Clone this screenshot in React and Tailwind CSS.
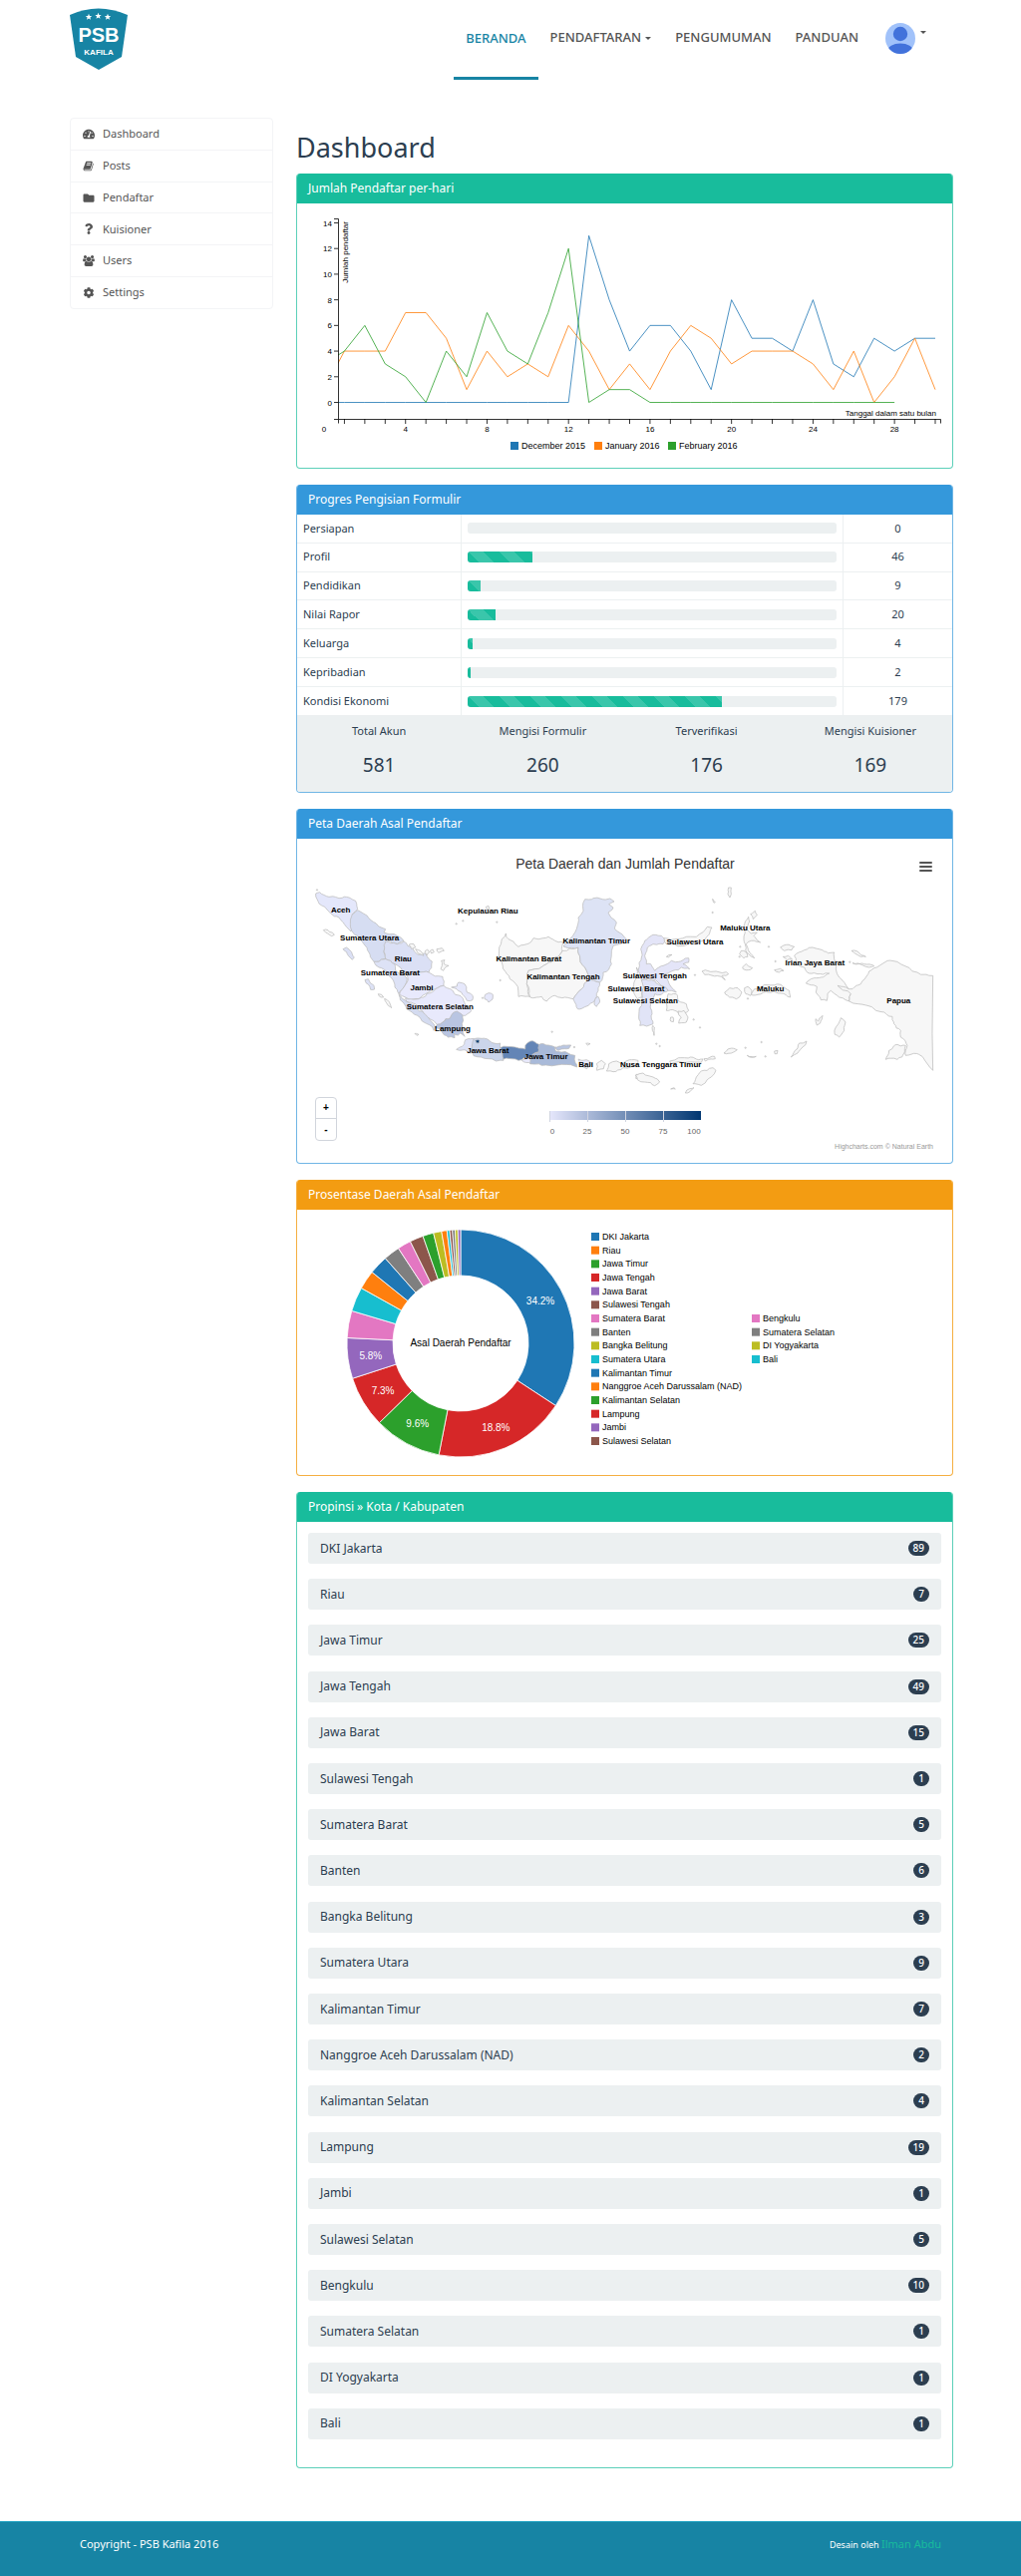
import React from "react";
import { FaTachometerAlt, FaFolder, FaQuestion, FaCog } from "react-icons/fa";

const SANS = "font-['Liberation_Sans',Arial,sans-serif]";

function BookIcon({ className }) {
  return (
    <svg viewBox="0 0 1792 1792" className={className} fill="currentColor" aria-hidden="true">
      <path d="M1639 478q40 57 18 129l-275 906q-19 64-76.5 107.5t-122.5 43.5h-923q-77 0-148.5-53.5t-99.5-131.5q-24-67-2-127 0-4 3-27t4-37q1-8-3-21.5t-3-19.5q2-11 8-21t16.5-23.5 16.5-23.5q23-38 45-91.5t30-91.5q3-10 .5-30t-.5-28q3-11 17-28t17-23q21-36 42-92t25-90q1-9-2.5-32t.5-28q4-13 22-30.5t22-22.5q19-26 42.5-84.5t27.5-96.5q1-8-3-25.5t-2-26.5q2-8 9-18t18-23 17-21q8-12 16.5-30.5t15-35 16-36 19.5-32 26.5-23.5 36-11.5 47.5 5.5l-1 3q38-9 51-9h761q74 0 114 56t18 130l-274 906q-36 119-71.5 153.5t-128.5 34.5h-869q-27 0-38 15-11 16-1 43 24 70 144 70h923q29 0 56-15.5t35-41.5l300-987q7-22 5-57 38 15 59 43zm-1064 2q-4 13 2 22.5t20 9.5h608q13 0 25.5-9.5t16.5-22.5l21-64q4-13-2-22.5t-20-9.5h-608q-13 0-25.5 9.5t-16.5 22.5zm-83 256q-4 13 2 22.5t20 9.5h608q13 0 25.5-9.5t16.5-22.5l21-64q4-13-2-22.5t-20-9.5h-608q-13 0-25.5 9.5t-16.5 22.5z" />
    </svg>
  );
}

function UsersIcon({ className }) {
  return (
    <svg viewBox="0 0 1920 1792" className={className} fill="currentColor" aria-hidden="true">
      <path d="M593 896q-162 5-265 128h-134q-82 0-138-40.5t-56-118.5q0-353 124-353 6 0 43.5 21t97.5 42.5 119 21.5q67 0 133-23-5 37-5 66 0 139 81 256zm1071 637q0 120-73 189.5t-194 69.5h-874q-121 0-194-69.5t-73-189.5q0-53 3.5-103.5t14-109 26.5-108.5 43-97.5 62-81 85.5-53.5 111.5-20q10 0 43 21.500t73 48 107 48 135 21.5 135-21.5 107-48 73-48 43-21.5q61 0 111.5 20t85.5 53.5 62 81 43 97.5 26.5 108.5 14 109 3.5 103.5zm-1024-1277q0 106-75 181t-181 75-181-75-75-181 75-181 181-75 181 75 75 181zm704 384q0 159-112.5 271.500t-271.500 112.500-271.500-112.500-112.500-271.500 112.500-271.500 271.500-112.500 271.500 112.500 112.500 271.500zm576 225q0 78-56 118.500t-138 40.500h-134q-103-123-265-128 81-117 81-256 0-29-5-66 66 23 133 23 59 0 119-21.500t97.500-42.500 43.500-21q124 0 124 353zm-128-609q0 106-75 181t-181 75-181-75-75-181 75-181 181-75 181 75 75 181z" />
    </svg>
  );
}

function Logo() {
  return (
    <svg viewBox="0 0 58 62" className="h-[62px] w-[58px]" role="img" aria-label="PSB Kafila">
      <path d="M0 7Q28.500 -6 58 7L52 49L29 62L6 49Z" fill="#1784a4" />
      <g fill="#fff">
        {[[19, 9], [28.5, 8], [38, 9]].map(([x, y]) => (
          <path
            key={x}
            transform={`translate(${x} ${y})`}
            d="M0 -3.300L.9 -1.100L3.200 -1L1.400 .5L2 2.800L0 1.500L-2 2.800L-1.400 .5L-3.200 -1L-.9 -1.100Z"
          />
        ))}
        <text x="29" y="34" textAnchor="middle" className="font-['Liberation_Sans'] text-[20px] font-bold">PSB</text>
        <text x="29" y="47" textAnchor="middle" className="font-['Liberation_Sans'] text-[8px] font-bold">KAFILA</text>
      </g>
    </svg>
  );
}

function Caret() {
  return (
    <svg viewBox="0 0 6 3" className="h-[3px] w-[6px]" fill="currentColor" aria-hidden="true">
      <path d="M0 0H6L3 3Z" />
    </svg>
  );
}

function Header() {
  const link = "flex h-20 items-center px-3 pb-1";
  return (
    <header className="flex h-20 items-start justify-between">
      <a href="#" className="mt-2"><Logo /></a>
      <nav className="flex pr-[27px] text-[13px] font-medium text-[#555]">
        <a href="#" className={`${link} border-b-[3px] border-[#1784a4] pt-1 text-[#1784a4]`}>BERANDA</a>
        <button className={`${link} gap-1`}>PENDAFTARAN <Caret /></button>
        <a href="#" className={link}>PENGUMUMAN</a>
        <a href="#" className={link}>PANDUAN</a>
        <button className="ml-[15px] mt-[23px] flex h-[31px] items-start gap-[5px]" aria-label="Akun">
          <svg viewBox="0 0 30 31" className="h-[31px] w-[30px]" aria-hidden="true">
            <clipPath id="avatar"><ellipse cx="15" cy="15.500" rx="15" ry="15.500" /></clipPath>
            <g clipPath="url(#avatar)">
              <rect width="30" height="31" fill="#a1c2fa" />
              <ellipse cx="15" cy="11" rx="7.200" ry="7.200" fill="#4272db" />
              <ellipse cx="15" cy="28.500" rx="13" ry="8" fill="#4272db" />
            </g>
          </svg>
          <span className="mt-2"><Caret /></span>
        </button>
      </nav>
    </header>
  );
}

const MENU = [
  ["Dashboard", FaTachometerAlt],
  ["Posts", BookIcon],
  ["Pendaftar", FaFolder],
  ["Kuisioner", FaQuestion],
  ["Users", UsersIcon],
  ["Settings", FaCog],
];

function Sidebar() {
  return (
    <nav className="mt-[38px] flex min-h-[192px] w-[204px] shrink-0 flex-col self-start rounded border border-gray-100 text-[11px] text-[#555]">
      {MENU.map(([label, Icon], i) => (
        <a
          key={label}
          href="#"
          className={`flex flex-1 items-center gap-2 px-3 ${i ? "border-t border-gray-100" : ""}`}
        >
          <span className="flex w-3 justify-center"><Icon className="h-[11px] w-3" /></span>
          {label}
        </a>
      ))}
    </nav>
  );
}

const TONES = {
  teal: ["border-[#18bc9c]/70", "bg-[#18bc9c]"],
  blue: ["border-[#3498db]/70", "bg-[#3498db]"],
  orange: ["border-[#f39c12]/80", "bg-[#f39c12]"],
};

function Panel({ title, tone, children }) {
  const [border, bg] = TONES[tone];
  return (
    <section className={`mb-4 overflow-hidden rounded border border-t-0 ${border}`}>
      <h2 className={`flex h-[30px] items-center px-[11px] text-[12px] text-white ${bg}`}>{title}</h2>
      {children}
    </section>
  );
}

const SERIES = [
  ["December 2015", "#1f77b4", [0, 0, 0, 0, 0, 0, 0, 0, 0, 0, 0, 0, 0, 13, 8, 4, 6, 6, 4, 1, 8, 5, 5, 4, 8, 3, 2, 5, 4, 5, 5], 214],
  ["January 2016", "#ff7f0e", [1, 4, 4, 4, 7, 7, 5, 1, 4, 2, 3, 2, 6, 4, 1, 3, 1, 4, 6, 5, 3, 4, 4, 4, 3, 1, 4, 0, 2, 5, 1], 298],
  ["February 2016", "#2ca02c", [3, 4, 6, 3, 2, 0, 4, 2, 7, 4, 3, 7, 12, 0, 1, 1, 0, 0, 0, 0, 0, 0, 0, 0, 0, 0, 0, 0, 0], 372],
];

function LineChart() {
  const x = (d) => 27 + (d * 613) / 30;
  const y = (v) => 199.5 - (v * 180) / 14;
  const days = Array.from({ length: 30 }, (_, i) => i + 1);
  return (
    <svg viewBox="0 0 657 265" className={`block w-full ${SANS} text-[8px]`} role="img" aria-label="Jumlah pendaftar per hari">
      <clipPath id="plot"><rect x="41" y="10" width="604" height="206" /></clipPath>
      <g clipPath="url(#plot)" fill="none">
        {SERIES.map(([name, color, data]) => (
          <polyline key={name} stroke={color} strokeOpacity=".8" points={data.map((v, i) => `${x(i)},${y(v)}`).join(" ")} />
        ))}
      </g>
      <g stroke="#000" strokeOpacity=".8" fill="none">
        <path d="M37 15.500H41.500V216.500H37M41.500 220.500V216.500H645.500V220.500" />
        {[0, 2, 4, 6, 8, 10, 12, 14].map((v) => <path key={v} d={`M37 ${y(v)}H41`} />)}
        {days.map((d) => <path key={d} d={`M${x(d)} 216V221`} />)}
      </g>
      {[0, 2, 4, 6, 8, 10, 12, 14].map((v) => <text key={v} x="35" y={y(v) + 3} textAnchor="end">{v}</text>)}
      {[4, 8, 12, 16, 20, 24, 28].map((d) => <text key={d} x={x(d)} y="229" textAnchor="middle">{d}</text>)}
      <text x="27" y="229" textAnchor="middle">0</text>
      <text x="641" y="213" textAnchor="end">Tanggal dalam satu bulan</text>
      <text transform="translate(51 18) rotate(-90)" textAnchor="end">Jumlah pendaftar</text>
      {SERIES.map(([name, color, , left]) => (
        <g key={name}>
          <rect x={left} y="239" width="8" height="8" fill={color} />
          <text x={left + 11} y="246" className="text-[9px]">{name}</text>
        </g>
      ))}
    </svg>
  );
}

const STEPS = [["Persiapan", 0], ["Profil", 46], ["Pendidikan", 9], ["Nilai Rapor", 20], ["Keluarga", 4], ["Kepribadian", 2], ["Kondisi Ekonomi", 179]];
const TOTALS = [["Total Akun", 581], ["Mengisi Formulir", 260], ["Terverifikasi", 176], ["Mengisi Kuisioner", 169]];

function Progress() {
  return (
    <>
      <table className="h-[201px] w-full border-collapse text-[11px]">
        <tbody>
          {STEPS.map(([name, n], i) => (
            <tr key={name} className={i ? "border-t border-[#ecf0f1]" : ""}>
              <th scope="row" className="w-1/4 px-[6px] text-left font-normal">{name}</th>
              <td className="border-x border-[#ecf0f1] px-[6px]">
                <div className="h-[11px] overflow-hidden rounded-[3px] bg-[#ecf0f1]">
                  <div
                    className="h-full bg-[#18bc9c] bg-[linear-gradient(45deg,rgba(255,255,255,.15)_25%,transparent_25%,transparent_50%,rgba(255,255,255,.15)_50%,rgba(255,255,255,.15)_75%,transparent_75%,transparent)] bg-[length:31px_31px]"
                    style={{ width: `${(n / 260) * 100}%` }}
                  />
                </div>
              </td>
              <td className="w-1/6 text-center">{n}</td>
            </tr>
          ))}
        </tbody>
      </table>
      <dl className="grid h-[77px] grid-cols-4 bg-[#ecf0f1] text-center">
        {TOTALS.map(([name, n]) => (
          <div key={name} className="pt-2">
            <dt className="text-[11px] leading-4">{name}</dt>
            <dd className="mt-3 text-[19px] leading-7">{n}</dd>
          </div>
        ))}
      </dl>
    </>
  );
}

const NONE = "#f7f7f7";
/* Land polygons: [fill, x-origin, points] on a grid of a third of a pixel. */
const LAND = [
  ["#e4e7fb", 0, "80 288 92 284 120 298 150 302 180 300 200 310 206 335 190 350 188 375 186 402 172 388 150 360 125 348 100 325 84 305"],
  ["#d6ddf2", 0, "206 338 235 355 262 378 290 395 285 405 300 410 345 430 325 440 300 430 290 450 285 465 290 485 255 493 240 465 225 440 210 420 188 400 190 350"],
  ["#dbe0f5", 0, "290 432 325 440 345 432 372 452 385 470 410 468 430 492 420 525 380 532 355 528 340 520 318 500 305 490 290 485 285 462"],
  ["#dde2f6", 0, "255 493 290 485 305 490 318 500 320 520 345 530 355 545 345 570 330 590 318 570 300 535 270 510"],
  ["#e8e9fc", 0, "355 528 380 532 420 525 462 538 465 565 440 575 410 590 390 605 350 600 332 592 345 570 358 548"],
  ["#e8e9fc", 0, "465 565 485 575 500 592 520 600 530 625 548 640 530 655 505 645 485 662 462 675 445 682 400 640 380 620 352 612 350 602 390 605 415 588 440 575"],
  ["#d4dbf0", 0, "330 592 352 612 378 625 400 642 430 675 440 690 435 700 400 672 370 645 345 618"],
  ["#b9c5e2", 0, "462 675 485 662 492 648 505 642 522 655 520 680 528 718 515 708 508 714 495 708 498 722 478 720 460 705 440 690 445 682"],
  ["#e6e8fb", 0, "488 570 505 567 510 555 528 560 535 585 552 595 552 608 535 610 522 592 508 580"],
  ["#e6e8fb", 0, "590 592 600 587 613 592 612 606 600 615 588 605"],
  [NONE, 0, "103 398 110 396 136 412 128 416"],
  ["#dbe0f5", 0, "162 455 172 450 188 464 196 480 190 487 178 475"],
  ["#dde2f6", 0, "228 548 238 545 255 565 257 576 245 577"],
  [NONE, 0, "268 590 278 592 284 600 276 600"],
  [NONE, 0, "287 604 295 608 308 632 298 625"],
  [NONE, 0, "378 709 390 712 384 715"],
  [NONE, 0, "360 442 375 440 380 450 368 455"],
  [NONE, 0, "380 455 395 460 405 475 388 468"],
  [NONE, 0, "408 462 416 456 422 465 414 474"],
  [NONE, 0, "424 460 432 456 436 464 428 468"],
  [NONE, 0, "444 455 460 452 466 460 450 466"],
  [NONE, 0, "458 490 468 488 466 500 480 505 468 512 464 520 456 515 460 505"],
  [NONE, 0, "592 328 600 325 602 334 596 337"],
  ["#dde2f6", 0, "530 728 555 724 560 735 550 752 548 768 528 758 503 757 520 748"],
  ["#cbd5eb", 0, "555 726 580 724 605 732 635 738 640 765 645 790 600 785 555 776 550 752"],
  ["#003a75", 0, "560 730 573 730 570 738 564 737"],
  ["#6385b6", 0, "636 752 680 750 710 756 716 738 726 732 752 742 750 765 735 770 720 780 690 790 645 786"],
  ["#e8e9fc", 0, "700 790 722 780 728 800"],
  ["#a9bad9", 0, "752 742 780 744 800 750 802 762 860 775 866 810 820 802 760 805 725 800 730 775 750 766"],
  ["#b9c6e2", 0, "800 750 825 744 848 744 842 754 810 760"],
  ["#e8e9fc", 0, "870 786 895 788 912 800 896 815 878 802"],
  [NONE, 0, "925 800 940 790 952 800 946 815 926 820"],
  [NONE, 0, "955 822 962 800 985 792 1005 802 1030 788 1050 790 1050 802 1005 812 975 824"],
  [NONE, 0, "893 739 906 740 898 744"],
  [NONE, 0, "1044 832 1055 832 1052 845 1043 844"],
  [NONE, 0, "652 408 660 425 690 448 715 440 735 422 780 418 800 430 825 435 822 460 800 480 775 500 720 520 715 560 725 598 690 598 682 560 655 530 640 495 632 450 640 425"],
  [NONE, 0, "822 460 870 450 875 480 895 520 905 545 880 575 855 605 830 600 800 595 775 612 760 598 725 600 715 560 720 520 775 500 800 480"],
  ["#dde3f5", 0, "890 305 915 302 965 303 978 312 962 320 975 330 960 345 985 375 980 395 1015 425 975 445 970 500 945 525 935 555 905 545 895 520 875 480 870 450 825 447 840 430 860 405 870 360 885 340"],
  ["#e2e6f8", 0, "905 548 935 556 930 580 925 600 900 625 868 635 855 605 880 575"],
  ["#e2e6f8", 0, "922 602 930 598 935 612 925 628 918 622"],
  ["#e4e5f8", 990, "70 480 68 455 80 430 92 420 105 412 130 415 140 425 135 440 105 440 88 450 80 475 85 500 98 500 110 520 135 505 160 490 195 488 212 482 212 495 195 500 215 515 190 510 165 520 140 530 150 550 175 585 150 580 120 555 100 545 70 550 60 520"],
  ["#e1e4f7", 990, "70 548 100 548 120 560 150 580 130 592 110 590 98 620 102 650 105 680 65 685 62 660 72 610"],
  [NONE, 990, "60 520 70 548 72 600 58 605 45 580 50 550 55 510"],
  [NONE, 990, "138 422 185 424 235 418 268 388 282 390 275 408 255 430 200 445 145 440"],
  [NONE, 990, "150 590 175 590 180 610 205 620 212 640 190 650 170 640 145 640 148 610"],
  [NONE, 990, "180 642 198 640 210 660 205 675 182 678 190 660"],
  [NONE, 990, "158 660 165 660 166 674 158 672"],
  [NONE, 990, "104 685 109 690 108 715 103 700"],
  [NONE, 990, "145 478 162 472 152 480"],
  [NONE, 990, "332 270 340 270 340 290 336 300 330 290"],
  [NONE, 990, "284 304 292 314 288 316"],
  [NONE, 990, "382 405 380 380 392 358 395 372 388 395 400 408 418 405 408 415 428 435 400 430 385 440 395 465 410 482 392 470 382 440"],
  [NONE, 990, "398 350 412 340 418 352 406 365"],
  [NONE, 990, "370 460 382 462 390 478 378 482 365 470"],
  [NONE, 990, "374 510 385 500 404 512 392 518 376 515"],
  [NONE, 990, "470 518 488 514 498 520 484 525"],
  [NONE, 990, "252 522 262 518 325 524 332 530 312 535 322 548 310 538 260 532"],
  [NONE, 990, "320 585 335 572 360 572 372 585 355 605 335 600"],
  [NONE, 990, "380 572 390 568 402 580 398 595 384 590"],
  [NONE, 990, "400 592 410 575 440 562 490 562 515 580 518 600 490 588 450 585 420 592"],
  [NONE, 990, "488 450 505 442 530 448 522 458 500 460"],
  [NONE, 990, "496 478 512 475 524 486 508 488"],
  [NONE, 990, "530 475 560 458 585 450 620 462 650 465 650 485 655 500 665 540 690 570 700 590 695 612 665 600 640 580 630 590 628 610 610 608 595 585 598 568 565 558 580 545 610 540 635 528 600 530 575 528 560 510 535 500"],
  [NONE, 990, "702 460 720 462 745 478 730 478 712 468"],
  [NONE, 990, "705 497 740 500 770 506 745 508"],
  [NONE, 990, "700 590 695 612 750 625 800 645 825 658 830 680 850 700 850 720 870 745 865 775 905 772 947 820 945 710 947 535 900 525 850 500 810 490 770 512 745 540 730 560 705 575 685 570 660 565"],
  [NONE, 990, "805 787 815 760 840 742 865 745 862 765 840 787"],
  [NONE, 990, "594 665 602 672 615 655 608 678 598 684"],
  [NONE, 990, "655 690 670 662 684 675 680 700 665 720 652 712"],
  [NONE, 990, "520 780 532 760 545 738 567 732 555 750 540 768"],
  [NONE, 990, "470 762 480 760 478 770 471 770"],
  [NONE, 990, "318 768 330 756 358 758 345 766 325 770"],
  [NONE, 990, "388 775 415 778 400 781"],
  [NONE, 990, "200 782 235 786 255 786 250 796 205 796 160 800 155 792"],
  [NONE, 990, "258 785 290 778 292 785 262 792"],
  [NONE, 990, "225 860 235 840 250 822 285 812 294 820 280 840 250 865"],
  [NONE, 990, "202 888 215 875 228 872 216 884"],
  [NONE, 990, "52 835 75 828 105 840 125 855 110 866 80 855 58 848"],
  [NONE, 990, "158 876 168 872 172 876"],
];
const ISLETS = [[84, 277], [503, 379], [523, 370], [625, 374], [635, 549], [582, 602], [791, 704], [858, 750], [1274, 345], [1221, 533], [1217, 667], [1236, 691], [1105, 740], [1115, 747], [1373, 752], [1421, 735], [1433, 778], [1463, 492], [1443, 448], [1687, 494], [1380, 604], [1357, 448], [1355, 478]];

/* Breaks each edge at a displaced midpoint; the shift depends only on the place, so shared borders still meet. */
function coast(origin, text) {
  const n = text.split(" ").map(Number);
  const pts = [];
  for (let i = 0; i < n.length; i += 2) pts.push([n[i] + origin, n[i + 1]]);
  const split = (list) => list.flatMap((p, i) => {
    const q = list[(i + 1) % list.length];
    const len = Math.hypot(q[0] - p[0], q[1] - p[1]);
    if (len < 12 || (p[0] > 1930 && q[0] > 1930)) return [p];
    const mx = (p[0] + q[0]) / 2;
    const my = (p[1] + q[1]) / 2;
    const k = Math.min(len * 0.12, 5);
    return [p, [mx + Math.sin(mx * 12.9 + my * 7.3) * k, my + Math.cos(mx * 5.7 + my * 11.1) * k]];
  });
  return "M" + split(split(pts)).map((p) => p.map((v) => v.toFixed(1)).join(" ")).join("L") + "Z";
}

const PLACES = [
  ["Aceh", 155, 335], ["Kepulauan Riau", 598, 340], ["Sumatera Utara", 242, 419], ["Riau", 343, 483], ["Sumatera Barat", 304, 526],
  ["Jambi", 399, 571], ["Sumatera Selatan", 454, 626], ["Lampung", 492, 692], ["Jawa Barat", 598, 760], ["Jawa Timur", 773, 778],
  ["Bali", 893, 801], ["Kalimantan Timur", 925, 428], ["Kalimantan Barat", 721, 483], ["Kalimantan Tengah", 825, 538],
  ["Sulawesi Tengah", 1100, 533], ["Sulawesi Barat", 1044, 574], ["Sulawesi Selatan", 1072, 608], ["Nusa Tenggara Timur", 1118, 801],
  ["Maluku Utara", 1372, 390], ["Sulawesi Utara", 1221, 433], ["Maluku", 1448, 574], ["Irian Jaya Barat", 1582, 494], ["Papua", 1834, 608],
];

function MapChart() {
  return (
    <div className="relative">
      <svg viewBox="0 0 657 325" className={`block w-full ${SANS} text-[8px]`} role="img" aria-label="Peta daerah dan jumlah pendaftar">
        <defs>
          <linearGradient id="scale"><stop offset="0" stopColor="#e6e7fc" /><stop offset="1" stopColor="#003671" /></linearGradient>
        </defs>
        <text x="329" y="30" textAnchor="middle" fill="#333" className="text-[14px]">Peta Daerah dan Jumlah Pendaftar</text>
        <g transform="translate(-8 -41) scale(.33333)" stroke="#bbb" strokeWidth="2.200" strokeLinejoin="round">
          {LAND.map(([fill, origin, text]) => <path key={text} d={coast(origin, text)} fill={fill} />)}
          {ISLETS.map(([cx, cy]) => <circle key={`${cx}-${cy}`} cx={cx} cy={cy} r="2" fill={NONE} />)}
        </g>
        <g className="font-bold" textAnchor="middle">
          {PLACES.map(([name, px, py]) => <text key={name} x={px / 3 - 8} y={py / 3 - 38}>{name}</text>)}
        </g>
        <rect x="253" y="273" width="152" height="9" fill="url(#scale)" />
        <path d="M253.500 273V284M291.500 273V284M329.500 273V284M367.500 273V284" stroke="#d0d4e0" />
        <g fill="#666" textAnchor="middle">
          {[[0, 256], [25, 291], [50, 329], [75, 367], [100, 398]].map(([v, px]) => <text key={v} x={px} y="296">{v}</text>)}
        </g>
        <text x="638" y="311" textAnchor="end" fill="#999" className="text-[7px]">Highcharts.com © Natural Earth</text>
      </svg>
      <button className="absolute right-[20px] top-[22px] flex h-3 w-[13px] flex-col justify-between py-px" aria-label="Menu grafik">
        <span className="h-[2px] w-full rounded bg-[#555]" />
        <span className="h-[2px] w-full rounded bg-[#555]" />
        <span className="h-[2px] w-full rounded bg-[#555]" />
      </button>
      <div className={`absolute bottom-[22px] left-[18px] flex w-[22px] flex-col divide-y divide-gray-300 rounded-sm border border-gray-300 text-[10px] font-bold leading-5 text-black ${SANS}`}>
        <button className="h-[21px]">+</button>
        <button className="h-[21px]">-</button>
      </div>
    </div>
  );
}

const COLORS = ["#1f77b4", "#ff7f0e", "#2ca02c", "#d62728", "#9467bd", "#8c564b", "#e377c2", "#7f7f7f", "#bcbd22", "#17becf"];
const PROVINCES = [
  ["DKI Jakarta", 89], ["Riau", 7], ["Jawa Timur", 25], ["Jawa Tengah", 49], ["Jawa Barat", 15], ["Sulawesi Tengah", 1], ["Sumatera Barat", 5],
  ["Banten", 6], ["Bangka Belitung", 3], ["Sumatera Utara", 9], ["Kalimantan Timur", 7], ["Nanggroe Aceh Darussalam (NAD)", 2],
  ["Kalimantan Selatan", 4], ["Lampung", 19], ["Jambi", 1], ["Sulawesi Selatan", 5], ["Bengkulu", 10], ["Sumatera Selatan", 1], ["DI Yogyakarta", 1], ["Bali", 1],
];
/* Slice order, as indices into PROVINCES, clockwise from the top. */
const ORDER = [0, 3, 2, 13, 4, 16, 9, 1, 10, 7, 6, 15, 12, 8, 11, 19, 5, 17, 18, 14];

function Donut() {
  let sum = 0;
  const at = (t, r) => [164 + r * Math.sin(t), 134 - r * Math.cos(t)];
  const slices = ORDER.map((i) => {
    const n = PROVINCES[i][1];
    const a = (sum / 260) * 2 * Math.PI;
    sum += n;
    const b = (sum / 260) * 2 * Math.PI;
    const large = b - a > Math.PI ? 1 : 0;
    const d = `M${at(a, 114)}A114 114 0 ${large} 1 ${at(b, 114)}L${at(b, 68)}A68 68 0 ${large} 0 ${at(a, 68)}Z`;
    return { i, n, d, mid: at((a + b) / 2, 91) };
  });
  return (
    <svg viewBox="0 0 657 266" className={`block w-full ${SANS} text-[10px]`} role="img" aria-label="Prosentase daerah asal pendaftar">
      {slices.map((s) => <path key={s.i} d={s.d} fill={COLORS[s.i % 10]} stroke="#fff" strokeWidth=".8" />)}
      {slices.filter((s) => s.n > 14).map((s) => (
        <text key={s.i} x={s.mid[0]} y={s.mid[1] + 4} textAnchor="middle" fill="#fff">{((s.n / 260) * 100).toFixed(1)}%</text>
      ))}
      <text x="164" y="137" textAnchor="middle">Asal Daerah Pendaftar</text>
      {PROVINCES.map(([name], i) => {
        const left = i < 16 ? 295 : 456;
        const mid = 27 + ((i < 16 ? i : i - 10) * 41) / 3;
        return (
          <g key={name}>
            <rect x={left} y={mid - 4} width="8" height="8" fill={COLORS[i % 10]} />
            <text x={left + 11} y={mid + 3} className="text-[9px]">{name}</text>
          </g>
        );
      })}
    </svg>
  );
}

function ProvinceList() {
  return (
    <ul className="mx-[11px] mb-[28px] mt-[11px] flex min-h-[909px] flex-col justify-between text-[12px]">
      {PROVINCES.map(([name, n]) => (
        <li key={name} className="flex h-[31px] items-center justify-between rounded-[3px] bg-[#ecf0f1] px-3">
          {name}
          <span className="flex h-[15px] items-center rounded-full bg-[#2c3e50] px-[5px] text-[10px] font-medium text-white">{n}</span>
        </li>
      ))}
    </ul>
  );
}

export default function App() {
  return (
    <div className="bg-white font-['Noto_Sans',sans-serif] text-[#2c3e50]">
      <div className="mx-auto max-w-[1170px] pl-[70px] pr-[68px]">
        <Header />
        <div className="flex gap-[23px]">
          <Sidebar />
          <main className="min-w-0 flex-1 pb-[37px]">
            <h1 className="mb-2 mt-[50px] text-[27px] leading-9">Dashboard</h1>
            <Panel title="Jumlah Pendaftar per-hari" tone="teal"><LineChart /></Panel>
            <Panel title="Progres Pengisian Formulir" tone="blue"><Progress /></Panel>
            <Panel title="Peta Daerah Asal Pendaftar" tone="blue"><MapChart /></Panel>
            <Panel title="Prosentase Daerah Asal Pendaftar" tone="orange"><Donut /></Panel>
            <Panel title="Propinsi » Kota / Kabupaten" tone="teal"><ProvinceList /></Panel>
          </main>
        </div>
      </div>
      <footer className="border-t border-[#1a9fc0] bg-[#1784a4]">
        <div className="mx-auto flex h-[54px] max-w-[1170px] items-start justify-between pl-20 pr-20 pt-3 text-[11px] leading-5 text-white">
          <p>Copyright - PSB Kafila 2016</p>
          <p className="text-[9px]">Desain oleh <a href="#" className="text-[11px] text-[#18bc9c]">Ilman Abdu</a></p>
        </div>
      </footer>
    </div>
  );
}
